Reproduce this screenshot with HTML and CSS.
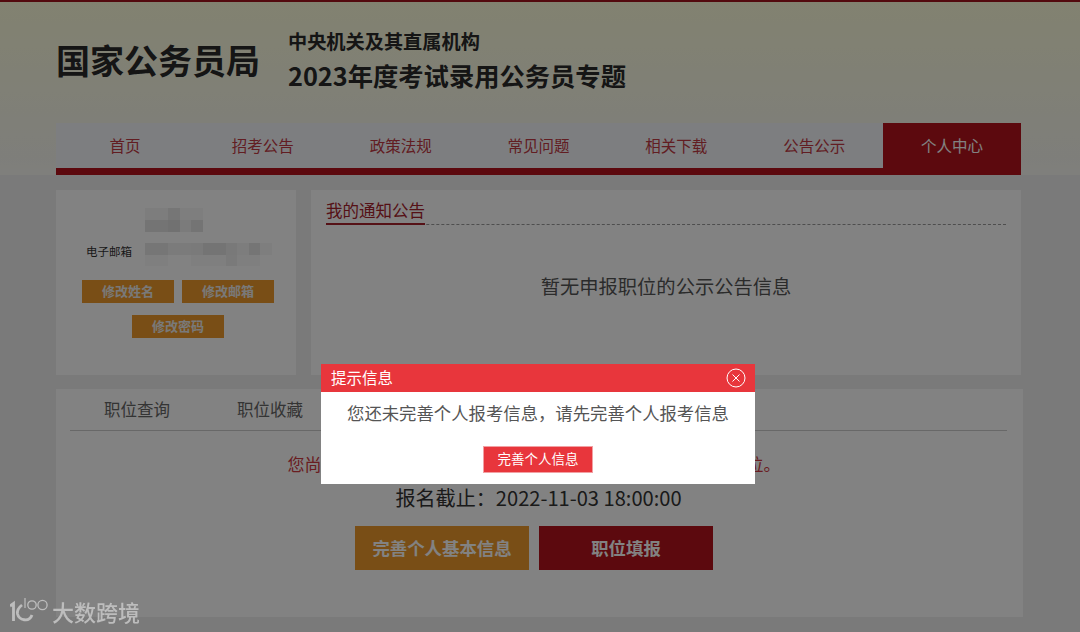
FILE: index.html
```html
<!DOCTYPE html>
<html lang="zh-CN">
<head>
  <meta charset="UTF-8" />
  <title>个人中心 - 国家公务员局</title>
  <link rel="stylesheet" href="styles.css">
</head>
<body>
  <header class="top">
    <div class="wrap">
      <div class="brand">
        <div class="brand-name">国家公务员局</div>
        <div class="brand-sub">
          <div class="sub-small">中央机关及其直属机构</div>
          <div class="sub-big">2023年度考试录用公务员专题</div>
        </div>
      </div>
      <nav class="nav">
        <a href="#">首页</a>
        <a href="#">招考公告</a>
        <a href="#">政策法规</a>
        <a href="#">常见问题</a>
        <a href="#">相关下载</a>
        <a href="#">公告公示</a>
        <a href="#" class="active">个人中心</a>
      </nav>
    </div>
  </header>

  <main class="wrap">
    <div class="upper">
      <section class="profile">
        <div class="profile-row name-row">
          <svg class="mosaic" width="58" height="24" viewBox="0 0 5 2" shape-rendering="crispEdges">
            <rect x="0" y="0" width="2" height="1" fill-opacity=".04"/>
            <rect x="2" y="0" width="1" height="1" fill-opacity=".09"/>
            <rect x="3" y="0" width="2" height="1" fill-opacity=".03"/>
            <rect x="0" y="1" width="2" height="1" fill-opacity=".11"/>
            <rect x="2" y="1" width="1" height="1" fill-opacity=".13"/>
            <rect x="3" y="1" width="1" height="1" fill-opacity=".05"/>
            <rect x="4" y="1" width="1" height="1" fill-opacity=".11"/>
          </svg>
        </div>
        <div class="profile-row email-row">
          <span class="profile-label">电子邮箱</span>
          <svg class="mosaic" width="127" height="23" viewBox="0 0 11 2" shape-rendering="crispEdges">
            <rect x="0" y="0" width="2" height="1" fill-opacity=".09"/>
            <rect x="2" y="0" width="2" height="1" fill-opacity=".05"/>
            <rect x="4" y="0" width="1" height="1" fill-opacity=".06"/>
            <rect x="5" y="0" width="2" height="1" fill-opacity=".11"/>
            <rect x="7" y="0" width="1" height="1" fill-opacity=".07"/>
            <rect x="8" y="0" width="1" height="1" fill-opacity=".04"/>
            <rect x="9" y="0" width="1" height="1" fill-opacity=".1"/>
            <rect x="10" y="0" width="1" height="1" fill-opacity=".03"/>
            <rect x="0" y="1" width="2" height="1" fill-opacity=".02"/>
            <rect x="4" y="1" width="3" height="1" fill-opacity=".02"/>
            <rect x="7" y="1" width="1" height="1" fill-opacity=".06"/>
            <rect x="8" y="1" width="2" height="1" fill-opacity=".02"/>
          </svg>
        </div>
        <div class="profile-btns">
          <a href="#" class="small-btn">修改姓名</a>
          <a href="#" class="small-btn">修改邮箱</a>
          <a href="#" class="small-btn">修改密码</a>
        </div>
      </section>

      <section class="notice">
        <div class="notice-head"><span>我的通知公告</span></div>
        <p class="notice-empty">暂无申报职位的公示公告信息</p>
      </section>
    </div>

    <section class="lower">
      <div class="tabs">
        <a href="#">职位查询</a>
        <a href="#">职位收藏</a>
      </div>
      <p class="warn">您尚未完善个人基本信息，请先完善个人基本信息后再填报职位。</p>
      <p class="deadline">报名截止：2022-11-03 18:00:00</p>
      <div class="actions">
        <a href="#" class="big-btn orange">完善个人基本信息</a>
        <a href="#" class="big-btn dark">职位填报</a>
      </div>
    </section>
  </main>

  <div class="mask"></div>

  <div class="dialog">
    <div class="dialog-head">
      <span>提示信息</span>
      <svg class="dialog-close" width="20" height="20" viewBox="0 0 20 20" fill="none" stroke="#fff" stroke-width="1">
        <circle cx="10" cy="10" r="9"/>
        <path d="M6.5 6.5l7 7M13.5 6.5l-7 7"/>
      </svg>
    </div>
    <div class="dialog-body">
      <p>您还未完善个人报考信息，请先完善个人报考信息</p>
      <a href="#" class="dialog-btn">完善个人信息</a>
    </div>
  </div>

  <div class="watermark">
    <svg width="40" height="30" viewBox="0 0 40 30" fill="none" stroke="#bdbdbd" stroke-width="2.8">
      <path d="M0 9l3.500-2.500V24"/>
      <path d="M12 8C8 11 7 14 7.500 17c1.500 6 11.500 9 14.500 1"/>
      <path d="M15 1v10" stroke-width="1.2"/>
      <circle cx="22" cy="8" r="4.200" stroke-width="1.300"/>
      <circle cx="32.500" cy="8" r="4.600" stroke-width="1.300"/>
    </svg>
    <span>大数跨境</span>
  </div>
</body>
</html>
```

FILE: styles.css
```css
body {
  margin: 0;
  height: 632px;
  overflow: hidden;
  background-color: #f0f0f0;
  font-family: "Noto Sans CJK SC", "Liberation Sans", sans-serif;
  color: #333;
}
a {
  text-decoration: none;
}
p {
  margin: 0;
}
.wrap {
  width: 965px;
  margin-left: 56px;
}
.top {
  height: 173px;
  border-top: 2px solid #a3141c;
  background: linear-gradient(#ffffdc, #f8f8f0 90%, #fafaf4);
}
.brand {
  display: flex;
  align-items: center;
  height: 118px;
  padding-bottom: 3px;
}
.brand-name {
  width: 232px;
  margin-bottom: 3px;
  font-size: 34px;
  font-weight: 700;
  color: #2a2a2a;
}
.brand-sub {
  color: #2a2a2a;
  font-weight: 700;
}
.sub-small {
  font-size: 19.200px;
  line-height: 28px;
}
.sub-big {
  font-size: 25.300px;
  line-height: 40px;
}
.nav {
  display: grid;
  grid-template-columns: repeat(7, 1fr);
  height: 45px;
  background: #f6f8fc;
  border-bottom: 7px solid #b4121c;
}
.nav a {
  font-size: 15.500px;
  line-height: 45px;
  text-align: center;
  color: #c03a44;
}
.nav a.active {
  height: 52px;
  background: #b4121c;
  color: #fff;
}
.upper {
  display: flex;
  gap: 15px;
  margin-top: 15px;
}
.profile {
  width: 240px;
  height: 185px;
  padding-top: 18px;
  box-sizing: border-box;
  background: #fff;
}
.profile-row {
  display: flex;
  align-items: flex-start;
  padding-left: 30px;
}
.name-row {
  padding-left: 89px;
}
.email-row {
  margin-top: 11px;
}
.profile-label {
  width: 59px;
  font-size: 11.500px;
  line-height: 17px;
  color: #333;
}
.mosaic {
  display: block;
}
.profile-btns {
  display: flex;
  flex-wrap: wrap;
  justify-content: center;
  gap: 12px 8px;
  margin-top: 14px;
  padding: 0 22px 0 26px;
}
.small-btn {
  width: 92px;
  height: 23px;
  background: #ee9a2c;
  color: #eee;
  font-size: 13px;
  font-weight: 700;
  line-height: 22px;
  text-align: center;
}
.notice {
  width: 710px;
  height: 185px;
  padding: 9px 15px 0;
  box-sizing: border-box;
  background: #fff;
}
.notice-head {
  display: flex;
  height: 25px;
  border-bottom: 1px dashed #999;
}
.notice-head span {
  height: 26px;
  box-sizing: border-box;
  font-size: 16.500px;
  line-height: 22px;
  color: #a8222c;
  border-bottom: 2px solid #a8222c;
}
.notice-empty {
  margin-top: 48px;
  font-size: 19.300px;
  line-height: 26px;
  text-align: center;
  color: #555;
}
.lower {
  width: 967px;
  height: 228px;
  margin-top: 14px;
  padding: 0 16px 0 14px;
  box-sizing: border-box;
  background: #fff;
  text-align: center;
}
.tabs {
  display: flex;
  gap: 67px;
  height: 41px;
  padding-left: 34px;
  border-bottom: 1px solid #ccc;
}
.tabs a {
  font-size: 16.500px;
  line-height: 40px;
  color: #666;
}
.warn {
  margin-top: 20px;
  padding-right: 9px;
  font-size: 17px;
  line-height: 26px;
  color: #d03a42;
  white-space: nowrap;
}
.deadline {
  margin-top: 7px;
  font-size: 20.100px;
  line-height: 28px;
  color: #333;
}
.actions {
  display: flex;
  justify-content: center;
  gap: 10px;
  margin-top: 14px;
  padding-right: 9px;
}
.big-btn {
  width: 174px;
  height: 44px;
  color: #fff;
  font-size: 17.400px;
  font-weight: 700;
  line-height: 44px;
}
.orange {
  background: #ee9a2c;
}
.dark {
  background: #b4121c;
}
.mask {
  position: fixed;
  inset: 0;
  background: rgba(0, 0, 0, 0.49);
}
.dialog {
  position: fixed;
  left: 321px;
  top: 364px;
  width: 434px;
  height: 120px;
  background: #fff;
}
.dialog-head {
  display: flex;
  align-items: center;
  justify-content: space-between;
  height: 28px;
  padding: 0 9px 0 10px;
  background: #e8363c;
  color: #fff;
  font-size: 15.500px;
  line-height: 24px;
}
.dialog-head span {
  margin-bottom: 3px;
}
.dialog-body {
  text-align: center;
}
.dialog-body p {
  padding-top: 8px;
  font-size: 17.360px;
  line-height: 26px;
  color: #555;
}
.dialog-btn {
  display: block;
  width: 110px;
  height: 27px;
  margin: 20px auto 0;
  box-sizing: border-box;
  border: 1px solid #f2a0a3;
  background: #e8363c;
  color: #fff;
  font-size: 13.500px;
  line-height: 23px;
}
.watermark {
  position: fixed;
  left: 10px;
  top: 597px;
  display: flex;
  align-items: center;
  gap: 2px;
  height: 30px;
  color: #bdbdbd;
  font-size: 22px;
  font-weight: 500;
  line-height: 26px;
}
.watermark span {
  margin-bottom: 3px;
}
```
